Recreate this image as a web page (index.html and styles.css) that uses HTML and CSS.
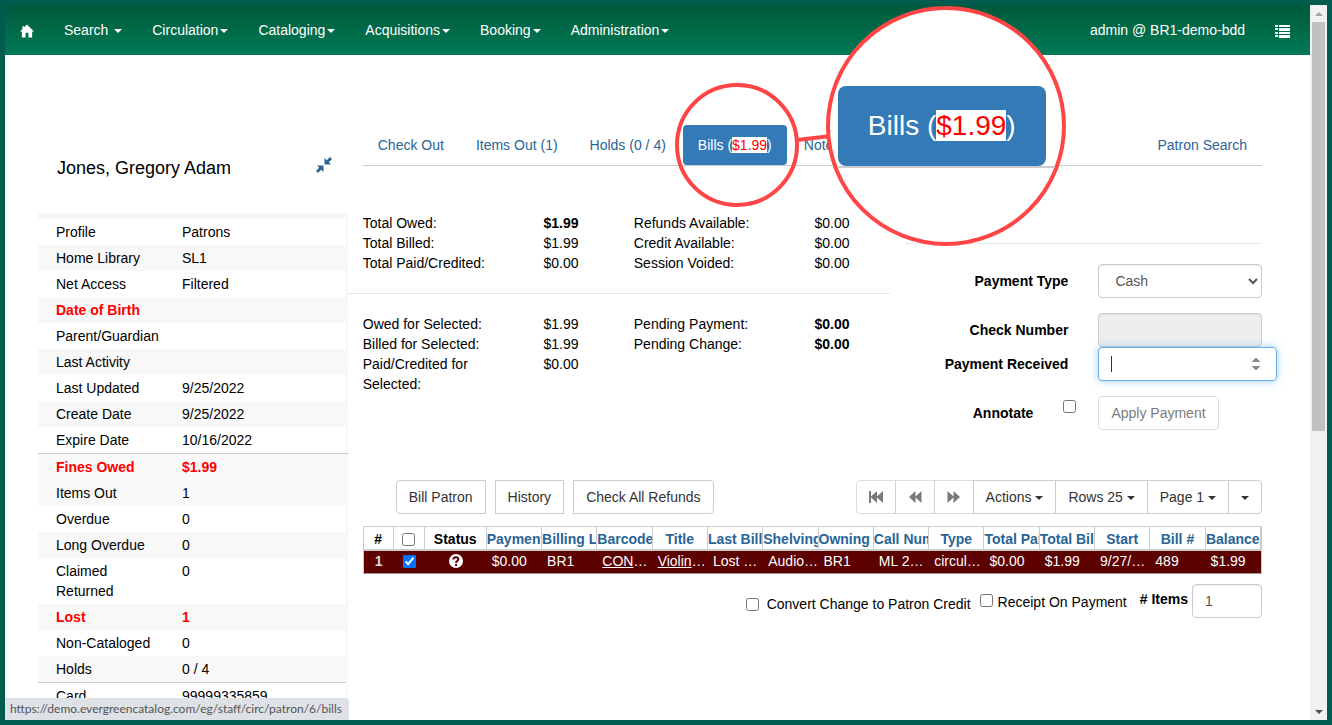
FILE: index.html
```html
<!DOCTYPE html>
<html lang="en">
<head>
<meta charset="utf-8">
<meta name="viewport" content="width=device-width, initial-scale=1">
<title>Patron Bills</title>
<link rel="stylesheet" href="styles.css">
</head>
<body>
<div class="window">
  <div class="viewport">
    <header class="navbar">
      <nav class="nav-menu" aria-label="Main">
        <a href="#" aria-label="Home"><svg class="icon-home" viewBox="0 0 15 14" aria-hidden="true"><path fill="currentColor" d="M7.500 0 15 7.500H13V14H9V9H6V14H2V7.500H0L2.500 5V2H4.500V3z"/></svg></a>
        <a href="#">Search <span class="caret"></span></a>
        <a href="#">Circulation<span class="caret"></span></a>
        <a href="#">Cataloging<span class="caret"></span></a>
        <a href="#">Acquisitions<span class="caret"></span></a>
        <a href="#">Booking<span class="caret"></span></a>
        <a href="#">Administration<span class="caret"></span></a>
      </nav>
      <div class="nav-user">
        <span>admin @ BR1-demo-bdd</span>
        <a href="#" aria-label="Account menu"><svg class="icon-list" viewBox="0 0 15 14" aria-hidden="true"><path fill="currentColor" d="M0 1H3V3H0zM4 1H15V3H4zM0 4H3V6H0zM4 4H15V7H4zM0 8H3V10H0zM4 8H15V10H4zM0 11H3V13H0zM4 11H15V14H4z"/></svg></a>
      </div>
    </header>

    <div class="page">
      <aside class="sidebar">
        <div class="patron-head">
          <h1>Jones, Gregory Adam</h1>
          <button class="collapse" type="button" aria-label="Collapse patron summary"><svg viewBox="0 0 16 16" aria-hidden="true"><path fill="currentColor" d="M14 0 16 2 12.800 5.200 15 7.500H8.500V1L10.800 3.200zM2 16 0 14 3.200 10.800 1 8.500H7.500V15L5.200 12.800z"/></svg></button>
        </div>
        <dl class="summary">
          <div class="white"><dt>Profile</dt><dd>Patrons</dd></div>
          <div><dt>Home Library</dt><dd>SL1</dd></div>
          <div class="white"><dt>Net Access</dt><dd>Filtered</dd></div>
          <div class="alert"><dt>Date of Birth</dt><dd></dd></div>
          <div class="white"><dt>Parent/Guardian</dt><dd></dd></div>
          <div><dt>Last Activity</dt><dd></dd></div>
          <div class="white"><dt>Last Updated</dt><dd>9/25/2022</dd></div>
          <div><dt>Create Date</dt><dd>9/25/2022</dd></div>
          <div class="white"><dt>Expire Date</dt><dd>10/16/2022</dd></div>
          <div class="alert ruled"><dt>Fines Owed</dt><dd>$1.99</dd></div>
          <div><dt>Items Out</dt><dd>1</dd></div>
          <div class="white"><dt>Overdue</dt><dd>0</dd></div>
          <div><dt>Long Overdue</dt><dd>0</dd></div>
          <div class="white"><dt>Claimed Returned</dt><dd>0</dd></div>
          <div class="alert"><dt>Lost</dt><dd>1</dd></div>
          <div class="white"><dt>Non-Cataloged</dt><dd>0</dd></div>
          <div><dt>Holds</dt><dd>0 / 4</dd></div>
          <div class="white ruled"><dt>Card</dt><dd>99999335859</dd></div>
        </dl>
      </aside>

      <main class="main">
        <ul class="tabs">
          <li><a href="#">Check Out</a></li>
          <li><a href="#">Items Out (1)</a></li>
          <li><a href="#">Holds (0 / 4)</a></li>
          <li class="active">
            <a href="#">Bills (<span class="owed">$1.99</span>)</a>
            <div class="ring"></div>
            <svg class="connector" viewBox="0 0 34 10" aria-hidden="true"><path d="M0 7 34 3" stroke="#ff4545" stroke-width="4"/></svg>
            <div class="lens" aria-hidden="true">
              <div class="lens-bar"><div class="lens-tab">Bills (<span class="owed">$1.99</span>)</div></div>
            </div>
          </li>
          <li><a href="#">Notes</a></li>
          <li class="last"><a href="#">Patron Search</a></li>
        </ul>

        <div class="billing">
          <section class="totals" aria-label="Totals">
            <div class="figures">
              <span>Total Owed:</span><b>$1.99</b><span>Refunds Available:</span><span>$0.00</span>
              <span>Total Billed:</span><span>$1.99</span><span>Credit Available:</span><span>$0.00</span>
              <span>Total Paid/Credited:</span><span>$0.00</span><span>Session Voided:</span><span>$0.00</span>
            </div>
            <hr>
            <div class="figures">
              <span>Owed for Selected:</span><span>$1.99</span><span>Pending Payment:</span><b>$0.00</b>
              <span>Billed for Selected:</span><span>$1.99</span><span>Pending Change:</span><b>$0.00</b>
              <span>Paid/Credited for Selected:</span><span>$0.00</span>
            </div>
          </section>

          <form class="payment">
            <hr>
            <div class="field"><label for="ptype">Payment Type</label><div><select id="ptype"><option>Cash</option></select></div></div>
            <div class="field tight"><label for="check">Check Number</label><div><input id="check" type="text" disabled></div></div>
            <div class="field wide"><label for="amount">Payment Received</label><div><input id="amount" type="number" autofocus></div></div>
            <div class="field"><span class="annotate"><label for="annotate">Annotate</label><input id="annotate" type="checkbox"></span><div><button class="btn" type="button" disabled>Apply Payment</button></div></div>
          </form>
        </div>

        <section class="grid" aria-label="Bills">
          <div class="toolbar">
            <div class="actions">
              <button class="btn first" type="button">Bill Patron</button>
              <button class="btn mid" type="button">History</button>
              <button class="btn end" type="button">Check All Refunds</button>
            </div>
            <div class="group">
              <button class="btn" type="button" disabled aria-label="First page"><svg class="i-page" viewBox="0 0 14 14" aria-hidden="true"><path fill="currentColor" d="M0 1H2V6.500L8 1V6.500L14 1V13L8 7.500V13L2 7.500V13H0z"/></svg></button>
              <button class="btn" type="button" disabled aria-label="Previous page"><svg class="i-page" viewBox="0 0 14 14" aria-hidden="true"><path fill="currentColor" d="M7.500 1V6.500L13.500 1V13L7.500 7.500V13L1 7z"/></svg></button>
              <button class="btn" type="button" disabled aria-label="Next page"><svg class="i-page" viewBox="0 0 14 14" aria-hidden="true"><path fill="currentColor" d="M6.500 1V6.500L.5 1V13L6.500 7.500V13L13 7z"/></svg></button>
              <button class="btn" type="button">Actions <span class="caret"></span></button>
              <button class="btn" type="button">Rows 25 <span class="caret"></span></button>
              <button class="btn" type="button">Page 1 <span class="caret"></span></button>
              <button class="btn" type="button" aria-label="Grid options"><span class="caret"></span></button>
            </div>
          </div>

          <table class="bills">
            <colgroup><col class="c-num"><col class="c-check"><col class="c-status"><col span="14"></colgroup>
            <thead>
              <tr>
                <th class="dark">#</th><th><input type="checkbox" aria-label="Select all"></th><th class="dark">Status</th>
                <th>Payment Pending</th><th>Billing Location</th><th>Barcode</th><th>Title</th><th>Last Billing Type</th><th>Shelving Location</th><th>Owning Library</th><th>Call Number</th><th>Type</th><th>Total Paid</th><th>Total Billed</th><th>Start</th><th>Bill #</th><th>Balance</th>
              </tr>
            </thead>
            <tbody>
              <tr>
                <td class="center num">1</td><td class="center"><input type="checkbox" checked aria-label="Select bill 489"></td>
                <td class="center"><svg class="i-help" viewBox="0 0 14 14" role="img" aria-label="Unknown status"><circle cx="7" cy="7" r="7" fill="#fff"/><path fill="none" stroke="#5c0000" stroke-width="2" d="M4.300 5.600C4.300 2.400 9.600 2.500 9.400 5.300 9.300 7 7.100 6.700 7.100 8.900"/><path fill="#5c0000" d="M6.100 10H8.100V12H6.100z"/></svg></td>
                <td>$0.00</td><td>BR1</td><td><a href="#">CONC40000501</a></td><td><a href="#">Violin concerto</a></td><td>Lost Materials</td><td>Audiovisual</td><td>BR1</td><td>ML 2533</td><td>circulation</td><td>$0.00</td><td>$1.99</td><td>9/27/2022</td><td>489</td><td>$1.99</td>
              </tr>
            </tbody>
          </table>

          <div class="options">
            <label class="convert"><input type="checkbox"> <span>Convert Change to Patron Credit</span></label>
            <label class="receipt"><input type="checkbox"> <span>Receipt On Payment</span></label>
            <label class="items" for="items">#&nbsp;Items</label>
            <input id="items" type="text" value="1">
          </div>
        </section>
      </main>
    </div>
    <div class="status">https://demo.evergreencatalog.com/eg/staff/circ/patron/6/bills</div>
  </div>
  <div class="scrollbar" aria-hidden="true">
    <span class="arrow up"></span>
    <div class="track"><div class="thumb"></div></div>
    <span class="arrow down"></span>
  </div>
</div>
</body>
</html>
```
FILE: styles.css
```css
* { box-sizing: border-box; }
body {
  margin: 0;
  font: 14px/20px "Liberation Sans", Arial, sans-serif;
  color: #000;
  background: #005c4f;
}
a { color: #2a6496; text-decoration: none; }
button, input, select { font: inherit; }
h1, dl, dd, ul { margin: 0; padding: 0; }
hr { border: 0; border-top: 1px solid #e8e8e8; margin: 20px 0; }
input[type="checkbox"] { width: 13px; height: 13px; margin: 0; flex: none; }

.window { display: flex; height: 100vh; padding: 5px; }
.viewport { position: relative; flex: 1; min-width: 0; overflow: hidden; background: #fff; }

.caret {
  display: inline-block;
  margin-left: 2px;
  vertical-align: middle;
  border-top: 4px solid;
  border-left: 4px solid transparent;
  border-right: 4px solid transparent;
}
.btn .caret { margin-left: 0; }

.navbar {
  display: flex;
  justify-content: space-between;
  height: 50px;
  padding: 0 5px 0 0;
  background: linear-gradient(#00593d, #007a54);
}
.nav-menu, .nav-user { display: flex; }
.navbar a, .nav-user span { display: block; padding: 15px; color: #fff; white-space: nowrap; }
.icon-home, .icon-list { display: block; height: 14px; margin-top: 4px; }
.icon-home { width: 14px; }
.icon-list { width: 15px; }

.page { display: flex; padding: 0 33px; }
.sidebar { flex: 0 0 25%; }
.main { flex: 1; min-width: 0; padding-top: 70px; }

.patron-head {
  display: flex;
  justify-content: space-between;
  padding: 102px 16px 34px 19px;
}
.patron-head h1 { font-size: 18px; font-weight: 400; line-height: 22px; }
.collapse { width: 16px; height: 16px; padding: 0; border: 0; background: none; color: #2a6496; }
.collapse svg { display: block; }

.summary { padding-top: 6px; background: #f8f8f8; }
.summary div { display: grid; grid-template-columns: 126px 1fr; padding: 3px 18px; }
.summary dt { padding-right: 20px; }
.summary .white { margin-right: 2px; background: #fff; }
.summary .alert { color: #f00; font-weight: 700; }
.summary .ruled { border-top: 1px solid #ccc; }

.tabs { display: flex; gap: 2px; margin: 0 15px; border-bottom: 1px solid #ccc; list-style: none; }
.tabs a { display: block; padding: 10px 15px; border-radius: 4px; white-space: nowrap; }
.tabs .last { margin-left: auto; }
.tabs .active { position: relative; z-index: 2; }
.tabs .active a { color: #fff; background: #337ab7; }
.owed { color: #f00; background: #fff; }

.ring, .lens { position: absolute; border: 4px solid #ff4545; border-radius: 50%; }
.ring { left: -8px; top: -42px; width: 124px; height: 124px; pointer-events: none; }
.connector { position: absolute; left: 114px; top: 8px; width: 34px; height: 10px; }
.lens {
  left: 143px;
  top: -119px;
  width: 240px;
  height: 240px;
  padding-top: 76px;
  overflow: hidden;
  background: #fff;
}
.lens-bar { padding-left: 8px; border-bottom: 2px solid #ccc; }
.lens-tab {
  width: 208px;
  padding: 20px 30px;
  border-radius: 8px;
  color: #fff;
  background: #337ab7;
  font-size: 28px;
  line-height: 40px;
  white-space: nowrap;
}

.billing { display: grid; grid-template-columns: 7fr 5fr; padding-top: 47px; }
.figures { display: grid; grid-template-columns: 2fr 1fr 2fr 1fr; }
.figures > * { padding: 0 15px; }
.payment { padding-top: 30px; }
.payment hr { margin: 0 15px 20px; }
.field { display: grid; grid-template-columns: 1fr 1fr; margin-bottom: 15px; }
.field.tight { margin-bottom: 0; }
.field label { padding: 7px 15px 0; font-weight: 700; text-align: right; }
.field > div { padding: 0 15px; }
.field.wide > div { padding-right: 0; }
.field input:not([type="checkbox"]), .field select, .options input[type="text"] {
  display: block;
  width: 100%;
  height: 34px;
  padding: 6px 12px;
  border: 1px solid #ccc;
  border-radius: 4px;
  color: #555;
  background: #fff;
  box-shadow: inset 0 1px 1px rgba(0, 0, 0, .075);
}
.field input#check:disabled { background: #eee; }
/* Steady text cursor in the focused amount box */
.field input#amount {
  border-color: #66afe9;
  outline: 0;
  caret-color: transparent;
  background: linear-gradient(#333, #333) 12px 50% / 1px 16px no-repeat #fff;
  box-shadow: 0 0 8px rgba(102, 175, 233, .6);
}
#amount::-webkit-inner-spin-button { opacity: 1; }
.annotate { display: flex; justify-content: flex-end; padding-right: 7px; }
.annotate label { padding-right: 30px; }
.annotate input { margin-top: 4px; }

.btn {
  height: 34px;
  padding: 6px 12px;
  border: 1px solid #ccc;
  border-radius: 4px;
  color: #333;
  background: #fff;
  white-space: nowrap;
}
.btn:disabled { opacity: .65; }

.grid { padding: 35px 15px 0; }
.toolbar { display: flex; justify-content: space-between; padding-left: 33px; }
.actions { display: flex; gap: 9px; }
.first { border-radius: 4px 0 0 4px; }
.mid { border-radius: 0; }
.end { border-radius: 0 4px 4px 0; }
.group { display: flex; }
.group .btn { border-radius: 0; }
.group .btn + .btn { margin-left: -1px; }
.group .btn:first-child { border-radius: 4px 0 0 4px; }
.group .btn:last-child { border-radius: 0 4px 4px 0; }
.i-page { display: block; width: 14px; height: 14px; }

.bills {
  width: 100%;
  margin-top: 12px;
  border: 1px solid #ccc;
  border-bottom-color: #999;
  border-spacing: 0;
  table-layout: fixed;
}
.c-num { width: 30px; }
.c-check { width: 31px; }
.c-status { width: 62px; }
.bills th {
  height: 24px;
  padding: 2px 0 0;
  border-right: 1px solid #ccc;
  border-bottom: 2px solid #ccc;
  overflow: hidden;
  color: #2a6496;
  line-height: 20px;
  white-space: nowrap;
}
.bills th.dark { color: #000; }
.bills td {
  height: 22px;
  padding: 0 0 2px 5px;
  overflow: hidden;
  color: #fff;
  background: #5c0000;
  text-overflow: ellipsis;
  white-space: nowrap;
}
.bills td a { color: inherit; text-decoration: underline; }
.bills .center { padding: 0 0 2px; text-align: center; }
.bills .num { font-weight: 700; color: #ddd; }
.bills input, .i-help { display: block; margin: 0 auto; }
.i-help { width: 14px; height: 14px; }

.options { display: flex; justify-content: flex-end; align-items: flex-start; padding-top: 10px; }
.options label { display: flex; white-space: nowrap; }
.convert { padding-top: 10px; }
.convert input { margin: 4px 8px 0 0; }
.receipt { padding: 8px 13px 0 9px; }
.receipt input { margin: 2px 5px 0 0; }
.options .items { padding: 5px 4px 0 0; font-weight: 700; }
.options #items { width: 70px; }

.status {
  position: absolute;
  left: 0;
  bottom: 0;
  padding: 2px 7px 2px 5px;
  border-top-right-radius: 4px;
  color: #555;
  background: #dee1e6;
  font: 12px/18px Lato, "Open Sans", sans-serif;
}

.scrollbar { display: flex; flex-direction: column; flex: none; width: 17px; background: #f1f1f1; }
.track { flex: 1; padding: 0 2px; }
.thumb { height: 60%; background: #c1c1c1; }
.arrow { display: flex; align-items: center; justify-content: center; height: 17px; }
.arrow::before { content: ""; border: 4px solid transparent; }
.up::before { border-top: 0; border-bottom-color: #a3a3a3; }
.down::before { border-bottom: 0; border-top-color: #505050; }
```
